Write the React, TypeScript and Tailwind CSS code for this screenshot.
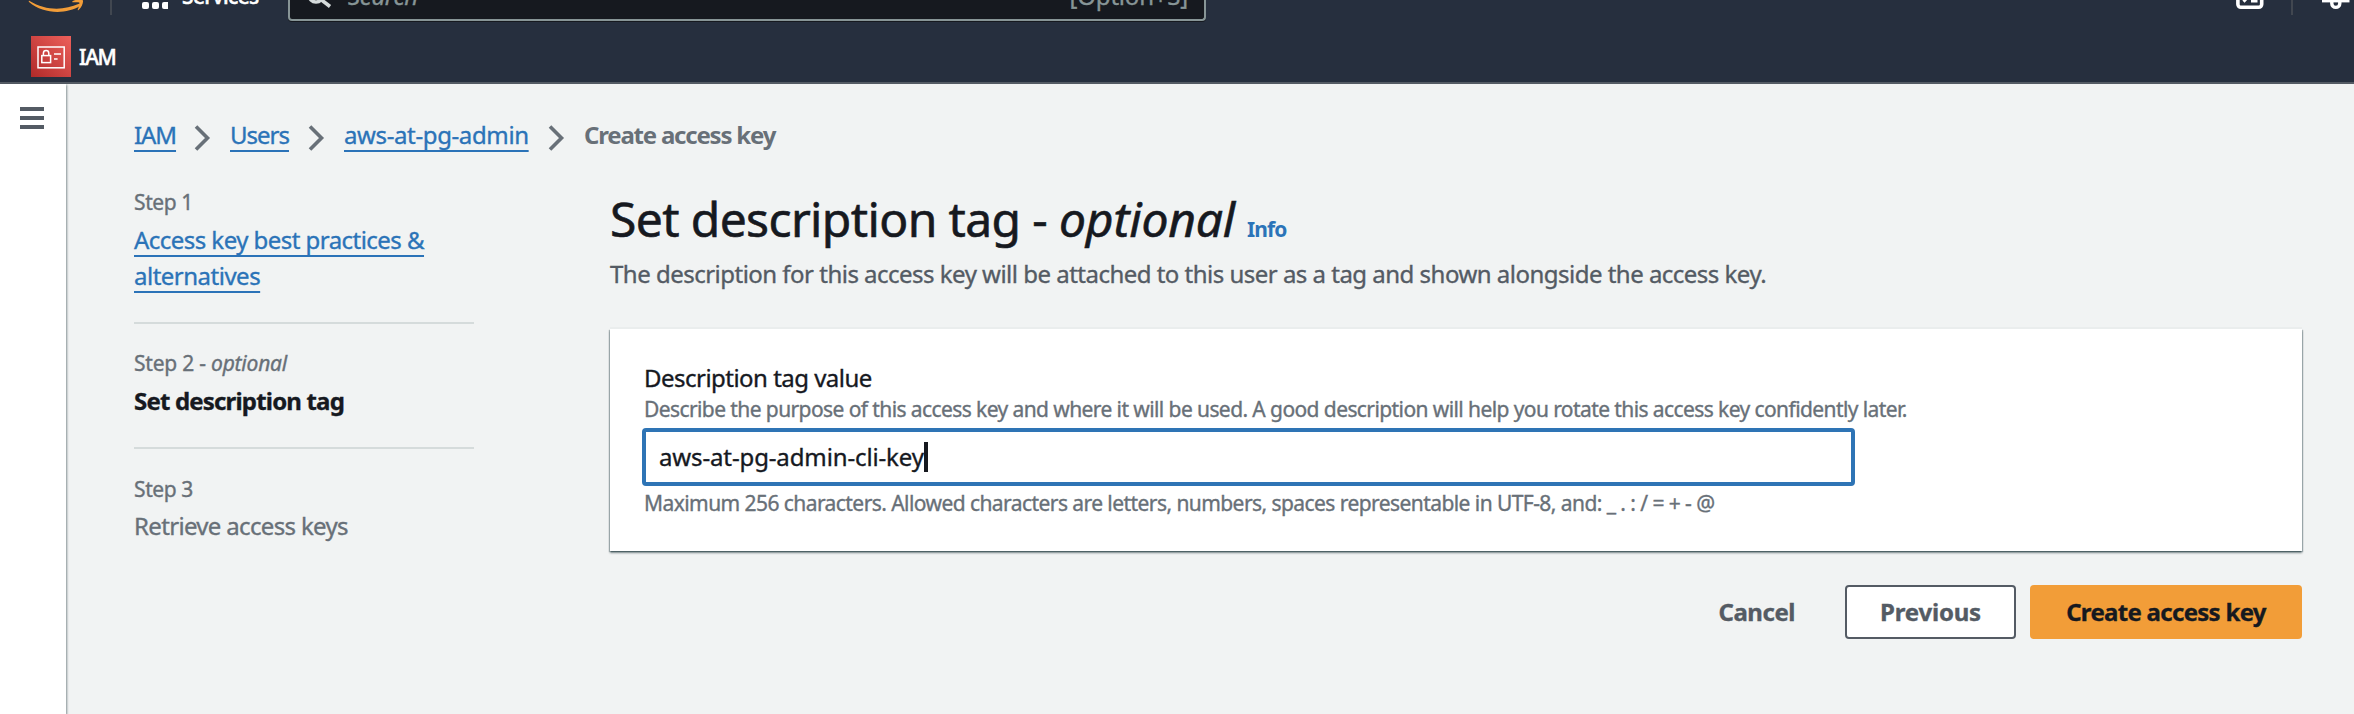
import React from "react";

const link = "text-[#2b73b8] underline decoration-2 underline-offset-[6px]";

function Chevron() {
  return (
    <svg className="mx-[19px] mt-[8px] h-[26px] w-[17px] shrink-0" viewBox="0 0 17 26" fill="none">
      <path d="M2 1.5 L13.5 13 L2 24.5" stroke="#687078" strokeWidth="3.6" />
    </svg>
  );
}

function AmazonSmile() {
  return (
    <svg className="h-[22px] w-[60px] shrink-0" viewBox="0 0 60 22">
      <path d="M1.6 1 C18 11 36 10.5 51 3.8 C53 3 54 4.6 52.4 5.8 C38 14.5 16 14.5 1 2 C0.4 1.2 1 0.6 1.6 1 Z" fill="#f29d38" />
      <path d="M44.5 1.2 C48 -1 54.5 -0.8 55 0.6 C55.4 2.4 53.6 7.6 50.6 10 C50 10.4 49.6 10.2 49.8 9.6 C50.6 7.6 52 4 51.4 2.8 C50.8 1.8 47 2.2 45 2.3 C44.2 2.3 44 1.6 44.5 1.2 Z" fill="#f29d38" />
    </svg>
  );
}

function IamIcon() {
  return (
    <svg className="h-[41px] w-[40px] shrink-0" viewBox="0 0 40 41" fill="none">
      <defs>
        <linearGradient id="iam" x1="0" y1="1" x2="1" y2="0">
          <stop offset="0" stopColor="#b02a29" />
          <stop offset="1" stopColor="#ed605b" />
        </linearGradient>
      </defs>
      <rect width="40" height="41" fill="url(#iam)" />
      <g stroke="#fff" strokeWidth="1.5">
        <rect x="7" y="11" width="26.2" height="20.8" />
        <rect x="10.8" y="19.6" width="8.8" height="7" />
        <path d="M12.4 19.6 V17.2 a2.7 2.7 0 0 1 5.4 0 V19.6 M23 18 H30 M23 23 H26.6" />
      </g>
    </svg>
  );
}

function Header() {
  return (
    <header className="flex h-[84px] shrink-0 flex-col border-b-2 border-[#545b64] bg-[#262f3e]">
      <div className="flex h-[22px] shrink-0 items-start overflow-hidden">
        <div className="ml-[28px] flex">
          <AmazonSmile />
        </div>
        <div className="ml-[22px] h-[15px] w-[2px] bg-[#414750]" />
        <div className="ml-[30px] flex gap-[3px] pt-[2px]">
          <i className="h-[7px] w-[7px] rounded-[2px] bg-white" />
          <i className="h-[7px] w-[7px] rounded-[2px] bg-white" />
          <i className="h-[7px] w-[6px] rounded-l-[2px] bg-white" />
        </div>
        <span className="-mt-[18px] ml-[14px] w-[106px] text-[21px] leading-[28px] font-medium tracking-[-0.65px] text-white [-webkit-text-stroke:0.5px]">Services</span>
        <div className="flex h-[21px] w-[918px] shrink-0 items-start rounded-b-[4px] border-2 border-t-0 border-[#879596] bg-[#16191f] shadow-[0_1px_0_#16191f]">
          <svg className="ml-[16px] h-[12px] w-[28px]" viewBox="0 0 28 12" fill="none" stroke="#d5dbdb" strokeWidth="3.6">
            <circle cx="10" cy="-5" r="7" />
            <path d="M15 -0.5 L24 6.5" />
          </svg>
          <span className="-mt-[22px] ml-[14px] text-[24px] leading-[36px] italic tracking-[-0.3px] text-[#879596]">Search</span>
          <span className="-mt-[22px] mr-[16px] ml-auto text-[24px] leading-[36px] tracking-[-0.2px] text-[#879596]">[Option+S]</span>
        </div>
        <svg className="ml-auto h-[12px] w-[28px] shrink-0" viewBox="0 0 28 12" fill="none" stroke="#fff">
          <rect x="1.9" y="-15" width="23.8" height="22.3" rx="3" strokeWidth="3.6" />
          <path d="M7.5 1.6 L10 -1 M15 1 H21.5" strokeWidth="3" />
        </svg>
        <div className="ml-[27px] h-[15px] w-[2px] bg-[#414750]" />
        <svg className="mr-[4px] ml-[29px] h-[12px] w-[28px] shrink-0" viewBox="0 0 28 12" fill="none" stroke="#fff">
          <path d="M0 0.8 H27.5" strokeWidth="3.2" />
          <path d="M9.8 0 V3.4 a4 4 0 0 0 8 0 V0" strokeWidth="3.4" />
        </svg>
      </div>
      <div className="mt-[14px] ml-[31px] flex items-center">
        <IamIcon />
        <span className="mt-px ml-[8px] text-[21px] leading-[28px] font-medium tracking-[-1.3px] text-white [-webkit-text-stroke:0.5px]">IAM</span>
      </div>
    </header>
  );
}

function Steps() {
  return (
    <nav className="w-[340px] shrink-0 pt-[35px] text-[24px] leading-[36px] text-[#687078]">
      <div className="border-b-2 border-[#d5dbdb] pb-[28px]">
        <div className="mb-[6px] text-[21px] leading-[28px] tracking-[-0.4px]">Step 1</div>
        <a className={link}>
          <span className="tracking-[-0.54px]">Access key best practices &amp;</span>
          <br />
          <span className="tracking-[-0.5px]">alternatives</span>
        </a>
      </div>
      <div className="border-b-2 border-[#d5dbdb] pt-[25px] pb-[28px]">
        <div className="mb-[6px] text-[21px] leading-[28px] tracking-[-0.22px]">
          Step 2 - <em>optional</em>
        </div>
        <div className="font-bold tracking-[-0.82px] text-[#16191f]">Set description tag</div>
      </div>
      <div className="pt-[26px]">
        <div className="mb-[5px] text-[21px] leading-[28px] tracking-[-0.4px]">Step 3</div>
        <div className="tracking-[-0.66px]">Retrieve access keys</div>
      </div>
    </nav>
  );
}

function Form() {
  return (
    <main className="w-[1692px] pt-[36px]">
      <h1 className="flex items-baseline text-[48px] leading-[60px] whitespace-pre text-[#16191f] [-webkit-text-stroke:0.6px]">
        <span className="tracking-[-0.62px]">Set description tag - </span>
        <em className="tracking-[-0.2px]">optional</em>
        <a className="ml-[12px] text-[21px] leading-[28px] font-bold tracking-[-0.9px] text-[#2b73b8] [-webkit-text-stroke:0px]">Info</a>
      </h1>
      <p className="mt-[7px] text-[24px] leading-[36px] tracking-[-0.513px] text-[#545b64]">
        The description for this access key will be attached to this user as a tag and shown alongside the access key.
      </p>
      <section className="mt-[37px] h-[222px] bg-white px-[34px] pt-[31px] shadow-[0_2px_2px_0_rgba(0,28,36,0.45),1px_1px_1px_0_rgba(0,28,36,0.25),-1px_1px_1px_0_rgba(0,28,36,0.25),0_-2px_0_0_#eaeded]">
        <label className="block text-[24px] leading-[35px] tracking-[-0.52px] text-[#16191f]">Description tag value</label>
        <p className="text-[21px] leading-[28px] tracking-[-0.59px] text-[#687078]">
          Describe the purpose of this access key and where it will be used. A good description will help you rotate this access key confidently later.
        </p>
        <div className="mt-[5px] -ml-[2px] flex h-[58px] w-[1213px] items-center rounded-[4px] border-4 border-[#2e74b5] bg-white pl-[13px]">
          <span className="text-[24px] leading-[36px] tracking-[-0.13px] text-[#16191f]">aws-at-pg-admin-cli-key</span>
          <i className="h-[30px] w-[4px] bg-[#16191f]" />
        </div>
        <p className="mt-[3px] text-[21px] leading-[28px] tracking-[-0.565px] text-[#687078]">
          Maximum 256 characters. Allowed characters are letters, numbers, spaces representable in UTF-8, and: _ . : / = + - @
        </p>
      </section>
      <div className="mt-[34px] flex h-[54px] justify-end text-[24px] leading-[36px] font-bold">
        <button className="mr-[50px] tracking-[-0.45px] text-[#545b64]">Cancel</button>
        <button className="mr-[14px] w-[171px] rounded-[4px] border-2 border-[#545b64] bg-white tracking-[-0.2px] text-[#545b64]">Previous</button>
        <button className="w-[272px] rounded-[4px] bg-[#f29d38] tracking-[-0.7px] text-[#16191f]">Create access key</button>
      </div>
    </main>
  );
}

export default function App() {
  return (
    <div className="flex h-[714px] w-[2354px] flex-col overflow-hidden bg-[#f1f3f3] font-['Noto_Sans',sans-serif] [-webkit-text-stroke:0.35px]">
      <Header />
      <div className="flex min-h-0 flex-1">
        <aside className="flex w-[66px] shrink-0 flex-col items-start gap-[5px] bg-white pt-[23px] pl-[20px] shadow-[1px_1px_2px_0_rgba(0,28,36,0.45)]">
          <i className="h-[4px] w-[24px] bg-[#545b64]" />
          <i className="h-[4px] w-[24px] bg-[#545b64]" />
          <i className="h-[4px] w-[24px] bg-[#545b64]" />
        </aside>
        <div className="pl-[68px]">
          <div className="flex pt-[33px] text-[24px] leading-[36px]">
            <a className={`w-[41px] tracking-[-1.07px] ${link}`}>IAM</a>
            <Chevron />
            <a className={`w-[59px] tracking-[-1px] ${link}`}>Users</a>
            <Chevron />
            <a className={`w-[185px] tracking-[-0.38px] ${link}`}>aws-at-pg-admin</a>
            <Chevron />
            <span className="font-bold tracking-[-1.2px] text-[#687078] [-webkit-text-stroke:0px]">Create access key</span>
          </div>
          <div className="flex gap-[136px]">
            <Steps />
            <Form />
          </div>
        </div>
      </div>
    </div>
  );
}
